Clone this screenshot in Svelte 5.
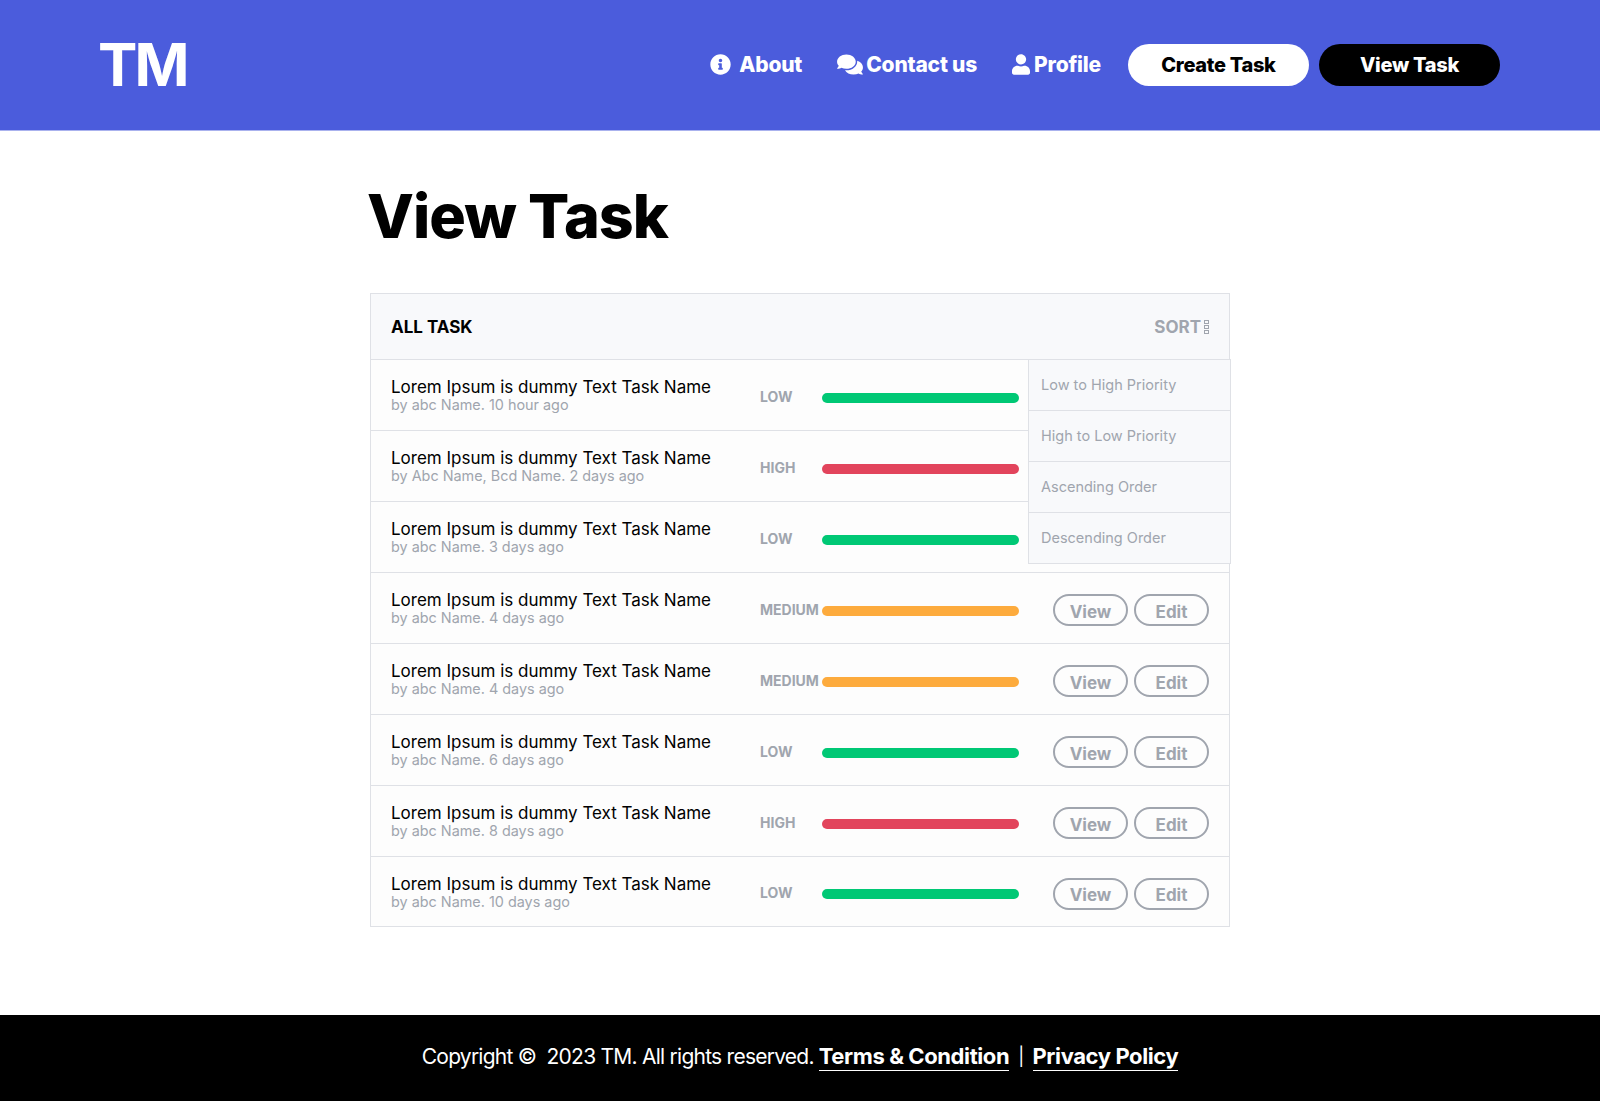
<script>
	const tasks = [
		{ by: 'by abc Name. 10 hour ago', level: 'LOW' },
		{ by: 'by Abc Name, Bcd Name. 2 days ago', level: 'HIGH' },
		{ by: 'by abc Name. 3 days ago', level: 'LOW' },
		{ by: 'by abc Name. 4 days ago', level: 'MEDIUM' },
		{ by: 'by abc Name. 4 days ago', level: 'MEDIUM' },
		{ by: 'by abc Name. 6 days ago', level: 'LOW' },
		{ by: 'by abc Name. 8 days ago', level: 'HIGH' },
		{ by: 'by abc Name. 10 days ago', level: 'LOW' }
	];
	const sorts = ['Low to High Priority', 'High to Low Priority', 'Ascending Order', 'Descending Order'];
	// the open sort menu sits over the first rows
	const menuRows = 3;
</script>

<header>
	<div class="logo">TM</div>
	<nav>
		<a class="about" href="#about">
			<svg class="ic-info" viewBox="0 0 512 512"><path d="M256 8C119.043 8 8 119.083 8 256c0 136.997 111.043 248 248 248s248-111.003 248-248C504 119.083 392.957 8 256 8zm0 110c23.196 0 42 18.804 42 42s-18.804 42-42 42-42-18.804-42-42 18.804-42 42-42zm56 254c0 6.627-5.373 12-12 12h-88c-6.627 0-12-5.373-12-12v-24c0-6.627 5.373-12 12-12h12v-64h-12c-6.627 0-12-5.373-12-12v-24c0-6.627 5.373-12 12-12h64c6.627 0 12 5.373 12 12v100h12c6.627 0 12 5.373 12 12v24z"/></svg>
			About
		</a>
		<a class="contact" href="#contact">
			<svg class="ic-comments" viewBox="0 0 576 512"><path d="M416 192c0-88.4-93.1-160-208-160S0 103.6 0 192c0 34.3 14.1 65.9 38 92-13.4 30.2-35.5 54.2-35.8 54.5-2.2 2.3-2.8 5.7-1.5 8.7S4.8 352 8 352c36.6 0 66.9-12.3 88.7-25 32.2 15.7 70.3 25 111.3 25 114.9 0 208-71.6 208-160zm122 220c23.9-26 38-57.7 38-92 0-66.9-53.5-124.2-129.3-148.1.9 6.6 1.3 13.3 1.3 20.1 0 105.9-107.7 192-240 192-10.8 0-21.3-.8-31.7-1.9C207.8 439.6 281.8 480 368 480c41 0 79.1-9.2 111.3-25 21.8 12.7 52.1 25 88.7 25 3.2 0 6.1-1.9 7.3-4.8 1.3-2.9.7-6.3-1.5-8.7-.3-.3-22.4-24.2-35.8-54.5z"/></svg>
			Contact us
		</a>
		<a class="profile" href="#profile">
			<svg class="ic-user" viewBox="0 0 448 512"><path d="M224 256c70.7 0 128-57.3 128-128S294.7 0 224 0 96 57.3 96 128s57.3 128 128 128zm89.6 32h-16.7c-22.2 10.2-46.9 16-72.9 16s-50.6-5.8-72.9-16h-16.7C60.2 288 0 348.2 0 422.4V464c0 26.5 21.5 48 48 48h352c26.5 0 48-21.5 48-48v-41.6c0-74.2-60.2-134.4-134.4-134.4z"/></svg>
			Profile
		</a>
		<button class="pill white">Create Task</button>
		<button class="pill black">View Task</button>
	</nav>
</header>

<main>
	<h1>View Task</h1>
	<section class="card">
		<div class="card-head">
			<strong>ALL TASK</strong>
			<span class="sort">SORT<i class="dots"><b></b><b></b><b></b></i></span>
		</div>
		{#each tasks as task, i}
			<div class="row">
				<div class="info">
					<div class="name">Lorem Ipsum is dummy Text Task Name</div>
					<div class="by">{task.by}</div>
				</div>
				<span class="level">{task.level}</span>
				<span class="bar {task.level.toLowerCase()}"></span>
				{#if i >= menuRows}
					<div class="actions">
						<button>View</button>
						<button>Edit</button>
					</div>
				{/if}
			</div>
		{/each}
		<ul class="menu">
			{#each sorts as s}
				<li>{s}</li>
			{/each}
		</ul>
	</section>
</main>

<footer>
	<span>Copyright ©&nbsp; 2023 TM. All rights reserved.</span>
	<a href="#terms">Terms &amp; Condition</a>
	<span class="sep">|</span>
	<a href="#privacy">Privacy Policy</a>
</footer>

<style>
	:global(body) {
		margin: 0;
		background: #fff;
		font-family: Inter, "Open Sans", sans-serif;
	}
	header {
		height: 131px;
		background: #4b5cdc;
		border-bottom: 1px solid #aab2ee;
		box-sizing: border-box;
		display: flex;
		align-items: center;
		justify-content: space-between;
		padding: 0 100px 1px 98px;
		color: #fff;
	}
	.logo {
		font-size: 59px;
		font-weight: 700;
		letter-spacing: -3px;
	}
	nav {
		display: flex;
		align-items: center;
	}
	nav a {
		display: flex;
		align-items: center;
		color: #fff;
		text-decoration: none;
		font-size: 21px;
		font-weight: 800;
		letter-spacing: -0.2px;
	}
	nav svg {
		fill: #fff;
		display: block;
	}
	.ic-info {
		width: 21px;
		height: 21px;
		margin-right: 8px;
	}
	.ic-comments {
		width: 26px;
		height: 23px;
		margin-right: 3px;
	}
	.ic-user {
		width: 18px;
		height: 21px;
		margin-right: 4px;
	}
	.about {
		margin-right: 35px;
	}
	.contact {
		margin-right: 35px;
	}
	.profile {
		margin-right: 27px;
	}
	.pill {
		width: 181px;
		height: 42px;
		border: 0;
		border-radius: 21px;
		font: 800 20px Inter, sans-serif;
		letter-spacing: -0.3px;
		padding: 0;
	}
	.white {
		background: #fff;
		color: #000;
		margin-right: 10px;
	}
	.black {
		background: #000;
		color: #fff;
	}
	main {
		width: 860px;
		margin: 0 auto;
		height: 884px;
		box-sizing: border-box;
	}
	h1 {
		margin: 0;
		padding-top: 45px;
		margin-left: -3px;
		font-size: 61px;
		line-height: 80px;
		font-weight: 800;
		color: #000;
		letter-spacing: -1px;
		height: 117px;
	}
	.card {
		position: relative;
		border: 1px solid #dfe1e6;
		background: #fdfdfd;
		box-sizing: border-box;
		width: 860px;
	}
	.card-head {
		height: 65px;
		background: #f8f9fb;
		display: flex;
		align-items: center;
		justify-content: space-between;
		padding: 0 20px;
		font-size: 17px;
		color: #000;
	}
	.card-head strong {
		font-weight: 700;
	}
	.sort {
		display: flex;
		align-items: center;
		color: #a0a5ae;
		font-weight: 700;
		gap: 3px;
	}
	.dots {
		display: flex;
		flex-direction: column;
		gap: 1px;
	}
	.dots b {
		display: block;
		width: 3px;
		height: 2px;
		border: 1px solid #a0a5ae;
	}
	.row {
		height: 71px;
		box-sizing: border-box;
		border-top: 1px solid #dfe1e6;
		display: flex;
		align-items: center;
		padding: 0 20px;
	}
	.row:last-of-type {
		height: 70px;
	}
	.info {
		width: 369px;
	}
	.name {
		font-size: 17px;
		line-height: 20px;
		color: #000;
	}
	.by {
		font-size: 14.4px;
		line-height: 16px;
		color: #a0a5ae;
	}
	.level {
		width: 62px;
		margin-top: 2px;
		font-size: 14px;
		font-weight: 700;
		color: #a0a5ae;
	}
	.bar {
		width: 197px;
		height: 10px;
		margin-top: 5px;
		border-radius: 5px;
	}
	.low {
		background: #00c875;
	}
	.high {
		background: #e2445c;
	}
	.medium {
		background: #fdab3d;
	}
	.actions {
		margin-left: auto;
		margin-top: 4px;
		display: flex;
		gap: 6px;
	}
	.actions button {
		width: 75px;
		height: 32px;
		padding: 3px 0 0;
		background: transparent;
		border: 2px solid #a0a5ae;
		border-radius: 16px;
		font: 700 17px Inter, sans-serif;
		color: #a0a5ae;
	}
	.menu {
		position: absolute;
		top: 65px;
		right: -2px;
		width: 203px;
		box-sizing: border-box;
		margin: 0;
		padding: 0;
		list-style: none;
		background: #f8f9fb;
		border: 1px solid #dfe1e6;
	}
	.menu li {
		height: 51px;
		box-sizing: border-box;
		display: flex;
		align-items: center;
		padding: 0 0 2px 12px;
		border-top: 1px solid #dfe1e6;
		font-size: 14.5px;
		color: #a0a5ae;
	}
	.menu li:first-child {
		border-top: 0;
		height: 50px;
	}
	footer {
		height: 86px;
		padding-bottom: 3px;
		box-sizing: border-box;
		background: #000;
		color: #fff;
		display: flex;
		align-items: center;
		justify-content: center;
		font-size: 21px;
		letter-spacing: -0.75px;
	}
	footer a {
		color: #fff;
		font-size: 22px;
		font-weight: 700;
		letter-spacing: -0.4px;
		text-decoration: none;
		border-bottom: 1px solid #fff;
		margin-left: 5px;
		padding-bottom: 1px;
	}
	.sep {
		margin: 0 9px;
		font-size: 18px;
	}
	.sep + a {
		margin-left: 0;
	}
</style>
